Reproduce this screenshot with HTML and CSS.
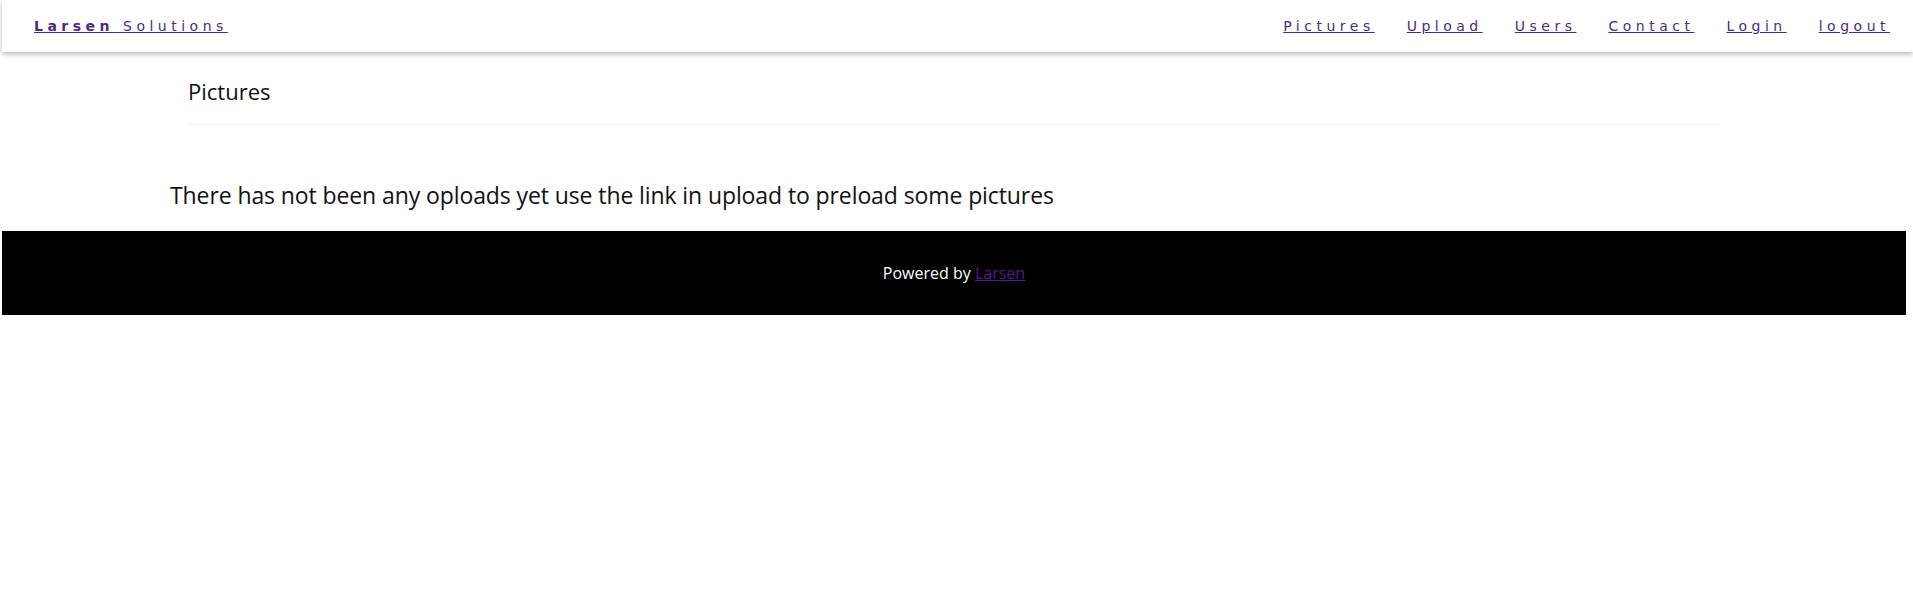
FILE: index.html
```html
<!DOCTYPE html>
<html lang="en">
<head>
<meta charset="utf-8">
<title>Larsen Solutions - Pictures</title>
<link rel="stylesheet" href="styles.css">
</head>
<body>
<header class="topbar">
  <a class="brand" href="#"><strong>Larsen</strong> Solutions</a>
  <nav class="menu">
    <a href="#">Pictures</a>
    <a href="#">Upload</a>
    <a href="#">Users</a>
    <a href="#">Contact</a>
    <a href="#">Login</a>
    <a href="#">logout</a>
  </nav>
</header>
<main class="content">
  <div class="page-head">
    <h1 class="page-title">Pictures</h1>
  </div>
  <p class="empty-note">There has not been any oploads yet use the link in upload to preload some pictures</p>
</main>
<footer class="site-footer">
  Powered by <a href="#">Larsen</a>
</footer>
</body>
</html>
```
FILE: styles.css
```css
html, body {
  margin: 0;
  padding: 0;
  background: #fff;
}

body {
  font-family: "Open Sans", "Noto Sans", sans-serif;
  color: #111;
}

.topbar {
  margin-left: 2px;
  height: 52px;
  display: flex;
  align-items: center;
  justify-content: space-between;
  padding: 0 23px 0 32px;
  background: #fff;
  box-shadow: 0 2px 5px rgba(0, 0, 0, 0.28);
  position: relative;
  z-index: 1;
}

.topbar a {
  font-family: "DejaVu Sans", Verdana, sans-serif;
  font-size: 14px;
  letter-spacing: 4.5px;
  color: #4e2a84;
  text-decoration: underline;
}

.brand strong {
  font-weight: bold;
}

.menu {
  display: flex;
  gap: 32px;
}

.content {
  margin: 0 7px 0 2px;
  padding: 26px 168px 21px;
}

.page-head {
  margin: 0 18px;
  padding-bottom: 20px;
  border-bottom: 1px solid #eee;
}

.page-title {
  margin: 0;
  font-size: 22px;
  font-weight: 400;
  line-height: 1.2;
  color: #111;
}

.empty-note {
  margin: 57px 0 0;
  font-size: 23px;
  letter-spacing: -0.1px;
  line-height: 1.2;
  color: #111;
}

.site-footer {
  margin: 0 7px 0 2px;
  background: #000;
  color: #fff;
  text-align: center;
  font-size: 16px;
  line-height: 24px;
  padding: 30px 0;
}

.site-footer a {
  color: #551a8b;
  text-decoration: underline;
}
```
